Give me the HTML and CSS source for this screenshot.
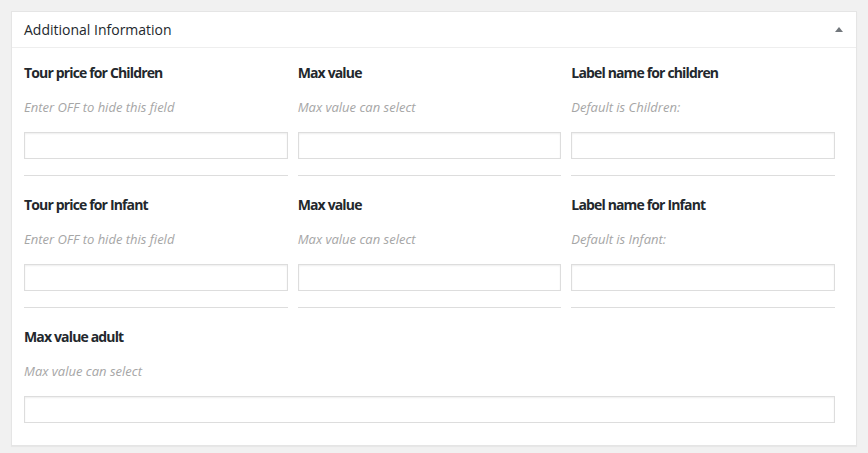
FILE: index.html
```html
<!DOCTYPE html>
<html>
<head>
<meta charset="utf-8">
<link rel="stylesheet" href="styles.css">
</head>
<body>
<div class="postbox">
  <div class="hndle">
    <h2>Additional Information</h2>
    <span class="toggle"></span>
  </div>
  <div class="inside">
    <div class="grid">
      <div class="field">
        <label>Tour price for Children</label>
        <p class="desc">Enter OFF to hide this field</p>
        <input type="text">
      </div>
      <div class="field">
        <label>Max value</label>
        <p class="desc">Max value can select</p>
        <input type="text">
      </div>
      <div class="field">
        <label>Label name for children</label>
        <p class="desc">Default is Children:</p>
        <input type="text">
      </div>
      <div class="field">
        <label>Tour price for Infant</label>
        <p class="desc">Enter OFF to hide this field</p>
        <input type="text">
      </div>
      <div class="field">
        <label>Max value</label>
        <p class="desc">Max value can select</p>
        <input type="text">
      </div>
      <div class="field">
        <label>Label name for Infant</label>
        <p class="desc">Default is Infant:</p>
        <input type="text">
      </div>
      <div class="field full last">
        <label>Max value adult</label>
        <p class="desc">Max value can select</p>
        <input type="text">
      </div>
    </div>
  </div>
</div>
</body>
</html>
```
FILE: styles.css
```css
html, body {
  margin: 0;
  padding: 0;
  background: #f1f1f1;
}
body {
  padding: 11px;
  font-family: "Open Sans", "Noto Sans", sans-serif;
  color: #23282d;
}
.postbox {
  background: #fff;
  border: 1px solid #e5e5e5;
  box-shadow: 0 1px 1px rgba(0,0,0,0.04);
  height: 435px;
  box-sizing: border-box;
}
.hndle {
  display: flex;
  align-items: center;
  justify-content: space-between;
  border-bottom: 1px solid #eee;
  padding: 0 12px;
  height: 35px;
}
.hndle h2 {
  margin: 0;
  font-size: 14px;
  font-weight: 400;
  line-height: 20px;
}
.toggle {
  width: 0;
  height: 0;
  border-left: 4px solid transparent;
  border-right: 4px solid transparent;
  border-bottom: 5px solid #72777c;
  margin-right: 1px;
  margin-top: 0;
}
.inside {
  padding: 0 21px 0 12px;
}
.grid {
  display: grid;
  grid-template-columns: repeat(3, 1fr);
  column-gap: 10px;
}
.field {
  display: flex;
  flex-direction: column;
  padding: 19px 0 16px;
  border-bottom: 1px solid #ddd;
}
.field:nth-child(-n+3) {
  padding-top: 15px;
}
.field.full {
  grid-column: 1 / -1;
}
.field.last {
  border-bottom: none;
  padding-bottom: 0;
}
.field label {
  font-size: 14px;
  font-weight: 700;
  line-height: 20px;
  letter-spacing: -0.85px;
}
.desc {
  margin: 15px 0 16px;
  font-size: 13px;
  font-style: italic;
  color: #a6a6a6;
  line-height: 18px;
}
.field input {
  box-sizing: border-box;
  height: 27px;
  margin: 0;
  border: 1px solid #ddd;
  box-shadow: inset 0 1px 2px rgba(0,0,0,0.07);
  background: #fff;
  width: 100%;
  font-size: 14px;
  padding: 3px 5px;
}
```
